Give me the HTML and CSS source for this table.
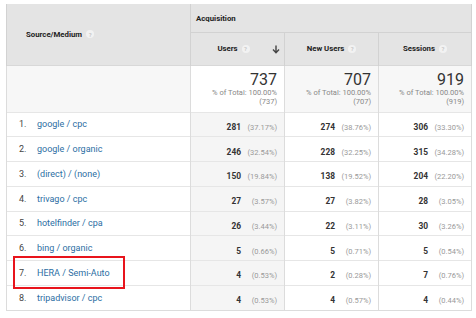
FILE: index.html
```html
<!DOCTYPE html>
<html>
<head>
<meta charset="utf-8">
<link rel="stylesheet" href="styles.css">
</head>
<body>
<div class="wrap">
<table class="report">
  <colgroup>
    <col class="c-src"><col class="c-num"><col class="c-num"><col class="c-last">
  </colgroup>
  <thead>
    <tr class="h1">
      <th rowspan="2" class="src-head"><span class="hlabel">Source/Medium <span class="q">?</span></span></th>
      <th colspan="3" class="group">Acquisition</th>
    </tr>
    <tr class="h2">
      <th class="metric sorted"><span class="hlabel">Users <span class="q">?</span></span><span class="arrow">
        <svg width="8" height="9" viewBox="0 0 8 9"><path d="M4 0.5v7M1 4.5l3 3.2 3-3.2" fill="none" stroke="#444" stroke-width="1.4"/></svg></span></th>
      <th class="metric"><span class="hlabel">New Users <span class="q">?</span></span></th>
      <th class="metric"><span class="hlabel">Sessions <span class="q">?</span></span></th>
    </tr>
  </thead>
  <tbody>
    <tr class="totals">
      <td class="tsrc"></td>
      <td class="tot sorted"><div class="big">737</div><div class="pct">% of Total: 100.00%</div><div class="pct">(737)</div></td>
      <td class="tot"><div class="big">707</div><div class="pct">% of Total: 100.00%</div><div class="pct">(707)</div></td>
      <td class="tot"><div class="big">919</div><div class="pct">% of Total: 100.00%</div><div class="pct">(919)</div></td>
    </tr>
    <tr><td class="src"><span class="rank">1.</span><a>google / cpc</a></td><td class="v sorted"><b>281</b><i>(37.17%)</i></td><td class="v"><b>274</b><i>(38.76%)</i></td><td class="v"><b>306</b><i>(33.30%)</i></td></tr>
    <tr><td class="src"><span class="rank">2.</span><a>google / organic</a></td><td class="v sorted"><b>246</b><i>(32.54%)</i></td><td class="v"><b>228</b><i>(32.25%)</i></td><td class="v"><b>315</b><i>(34.28%)</i></td></tr>
    <tr><td class="src"><span class="rank">3.</span><a>(direct) / (none)</a></td><td class="v sorted"><b>150</b><i>(19.84%)</i></td><td class="v"><b>138</b><i>(19.52%)</i></td><td class="v"><b>204</b><i>(22.20%)</i></td></tr>
    <tr><td class="src"><span class="rank">4.</span><a>trivago / cpc</a></td><td class="v sorted"><b>27</b><i>(3.57%)</i></td><td class="v"><b>27</b><i>(3.82%)</i></td><td class="v"><b>28</b><i>(3.05%)</i></td></tr>
    <tr><td class="src"><span class="rank">5.</span><a>hotelfinder / cpa</a></td><td class="v sorted"><b>26</b><i>(3.44%)</i></td><td class="v"><b>22</b><i>(3.11%)</i></td><td class="v"><b>30</b><i>(3.26%)</i></td></tr>
    <tr><td class="src"><span class="rank">6.</span><a>bing / organic</a></td><td class="v sorted"><b>5</b><i>(0.66%)</i></td><td class="v"><b>5</b><i>(0.71%)</i></td><td class="v"><b>5</b><i>(0.54%)</i></td></tr>
    <tr><td class="src hl"><span class="box"></span><span class="rank">7.</span><a>HERA / Semi-Auto</a></td><td class="v sorted"><b>4</b><i>(0.53%)</i></td><td class="v"><b>2</b><i>(0.28%)</i></td><td class="v"><b>7</b><i>(0.76%)</i></td></tr>
    <tr><td class="src"><span class="rank">8.</span><a>tripadvisor / cpc</a></td><td class="v sorted"><b>4</b><i>(0.53%)</i></td><td class="v"><b>4</b><i>(0.57%)</i></td><td class="v"><b>4</b><i>(0.44%)</i></td></tr>
  </tbody>
</table>
</div>
</body>
</html>
```
FILE: styles.css
```css
* { box-sizing: border-box; }
html, body { margin: 0; padding: 0; background: #fff; }
body { font-family: Roboto, "Liberation Sans", Arial, sans-serif; color: #333; }
.wrap { padding: 4px 5px 0 6px; }
.report {
  border-collapse: collapse;
  width: 465px;
  table-layout: fixed;
}
.c-src { width: 184px; }
.c-num { width: 94px; }
.c-last { width: 93px; }
.report th {
  background: #e4e4e4;
  font-weight: 700;
  font-size: 7.8px;
  color: #222;
  border-left: 1px solid #d2d2d2;
  border-right: 1px solid #d2d2d2;
  padding: 0;
}
.h1 th { height: 28px; }
.h2 th { height: 33px; border-top: 1px solid #d2d2d2; }
.src-head { text-align: left; padding-left: 19px !important; border-left: 1px solid #dcdcdc; }
.group { text-align: left; padding-left: 5px !important; vertical-align: top; padding-top: 10px !important; }
.metric { position: relative; text-align: center; }
.metric.sorted .hlabel { margin-left: -8px; }
.hlabel { display: inline-flex; align-items: center; gap: 4px; }
.q {
  display: inline-flex; align-items: center; justify-content: center;
  width: 8px; height: 8px; border-radius: 50%;
  background: #f2f2f2; color: #c8c8c8;
  font-size: 6px; font-weight: 700;
}
.arrow { position: absolute; right: 4px; top: 12px; display: block; line-height: 0; }
.report td {
  border-left: 1px solid #dcdcdc;
  border-right: 1px solid #dcdcdc;
  border-top: 1px solid #e6e6e6;
  padding: 0;
}
.report tbody tr:last-child td { border-bottom: 1px solid #dcdcdc; }
.totals td { height: 47px; background: #f7f7f7; border-top: 1px solid #d8d8d8; }
.totals td.sorted { background: #fff; }
.tot { text-align: right; padding-right: 7px !important; vertical-align: top; padding-top: 6px !important; }
.big { font-size: 16px; color: #333; line-height: 16px; font-weight: 400; }
.pct { font-size: 7.5px; color: #888; line-height: 9px; white-space: nowrap; }
.report tbody tr:not(.totals) td { height: 24.75px; }
.src { position: relative; font-size: 9px; padding-left: 12px !important; white-space: nowrap; }
.rank { display: inline-block; width: 18px; color: #444; }
.src a { color: #2c6ea3; }
.v { text-align: right; padding-right: 7px !important; white-space: nowrap; }
.v.sorted { background: #f5f5f5; }
.v b { font-size: 8.4px; font-weight: 700; color: #333; }
.v i { font-style: normal; font-size: 7.5px; color: #999; display: inline-block; width: 36px; text-align: right; }
.box {
  position: absolute; left: 6px; top: -5px;
  width: 112px; height: 33px;
  border: 2px solid #e8141c;
}
```
